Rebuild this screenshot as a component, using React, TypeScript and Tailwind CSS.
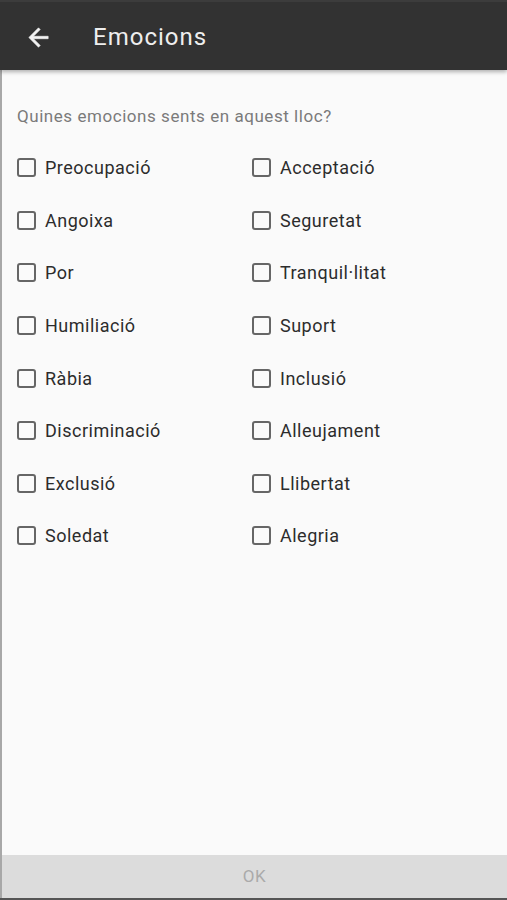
import React from "react";

const left = ["Preocupació", "Angoixa", "Por", "Humiliació", "Ràbia", "Discriminació", "Exclusió", "Soledat"];
const right = ["Acceptació", "Seguretat", "Tranquil·litat", "Suport", "Inclusió", "Alleujament", "Llibertat", "Alegria"];

function Item({ label }: { label: string }) {
  return (
    <div className="flex items-center h-[52.6px]">
      <div className="w-[19px] h-[19px] border-2 border-[#666666] rounded-[3px] shrink-0" />
      <span className="ml-[9px] text-[18px] text-[#2c2c2c] tracking-[0.5px]">{label}</span>
    </div>
  );
}

export default function App() {
  return (
    <div className="w-[507px] h-[900px] flex flex-col bg-[#fafafa] overflow-hidden" style={{ fontFamily: "Roboto, 'Noto Sans', sans-serif" }}>
      <div className="h-[70px] shrink-0 bg-[#323232] border-t-2 border-[#3c3c3c] flex items-center relative shadow-[0_2px_4px_rgba(0,0,0,0.3)] z-10">
        <svg className="ml-[24px] mt-[2px]" width="29" height="29" viewBox="0 0 24 24">
          <path d="M20 11H7.83l5.59-5.59L12 4l-8 8 8 8 1.41-1.41L7.83 13H20v-2z" fill="#f2f2f2" stroke="#f2f2f2" strokeWidth="0.5" />
        </svg>
        <span className="ml-[40px] mt-[2px] text-[24px] text-[#eeeeee] tracking-[1px]">Emocions</span>
      </div>
      <div className="flex-1 flex flex-col border-l-2 border-[#a8a8a8]">
        <div className="pl-[15px] pt-[34px] text-[17px] text-[#7a7a7a] tracking-[0.55px]">Quines emocions sents en aquest lloc?</div>
        <div className="grid grid-cols-2 pl-[15px] mt-[12px]">
          <div className="flex flex-col">
            {left.map((l) => <Item key={l} label={l} />)}
          </div>
          <div className="flex flex-col ml-[-10px]">
            {right.map((l) => <Item key={l} label={l} />)}
          </div>
        </div>
      </div>
      <div className="h-[43px] shrink-0 bg-[#dcdcdc] border-l-2 border-[#a8a8a8] flex items-center justify-center text-[17px] text-[#aaaaaa] tracking-[0.5px]">
        OK
      </div>
      <div className="h-[2px] shrink-0 bg-[#555555]" />
    </div>
  );
}
